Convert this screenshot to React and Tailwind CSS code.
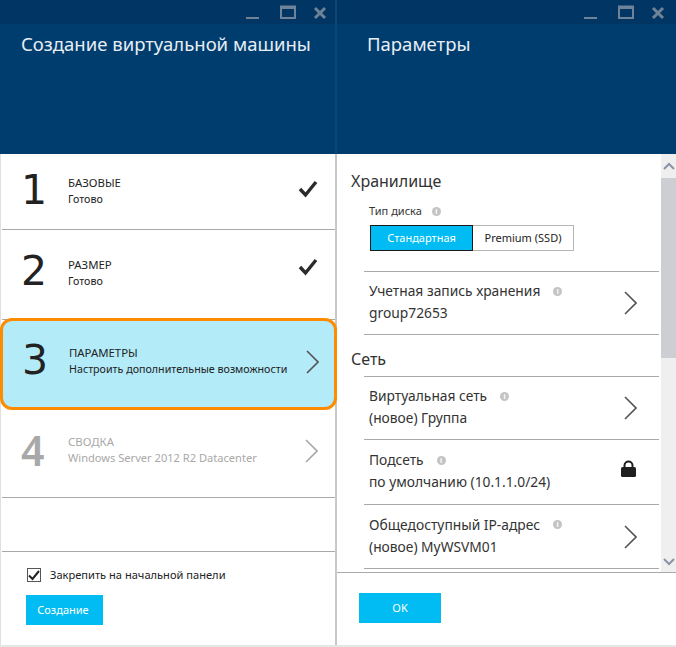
const FONT = "font-['Noto_Sans','Open_Sans',sans-serif]";

function WindowButtons({ pad }) {
  return (
    <div className={`flex h-6 items-center bg-[#003564] ${pad}`}>
      <svg width="82" height="24" viewBox="0 0 82 24" fill="none" stroke="#6f8398">
        <path d="M0 18h13" strokeWidth="2" />
        <rect x="35" y="8" width="14" height="10" strokeWidth="2" />
        <path d="M34 7h16" strokeWidth="3" />
        <path d="M69 8l10 10M79 8L69 18" strokeWidth="3" />
      </svg>
    </div>
  );
}

function Header({ title, pad, btnPad }) {
  return (
    <div className="h-[154px] shrink-0 bg-[#003d6f]">
      <WindowButtons pad={btnPad} />
      <h1 className={`${pad} pt-[6px] text-[18.5px] leading-[28px] text-[#e8eef4]`}>{title}</h1>
    </div>
  );
}

function Chevron({ color = "#555" }) {
  return (
    <svg width="13" height="24" viewBox="0 0 13 24" fill="none" stroke={color} strokeWidth="1.6">
      <path d="M1 1l11 11L1 23" />
    </svg>
  );
}

function Check() {
  return (
    <svg width="20" height="18" viewBox="0 0 20 18" fill="none" stroke="#2b2b2b" strokeWidth="3.4">
      <path d="M2 9l5.5 6L18 2" />
    </svg>
  );
}

function Step({ n, title, sub, subSize = "text-[10.7px]", right, muted, active, height, numTop, textTop, iconTop }) {
  const text = muted ? "text-[#a8a8a8]" : "text-[#222]";
  return (
    <div
      className={
        active
          ? `relative z-10 -mt-[2px] -mr-[2px] -ml-px flex h-[92px] items-start rounded-xl border-[3px] border-[#ff8c00] bg-[#b3ebf9] ${text}`
          : `ml-px flex ${height} items-start border-b border-[#a9a9a9] ${text}`
      }
    >
      <div
        className={`${numTop} ml-[19px] w-[47px] text-[41px] leading-[52px] ${
          muted ? "font-semibold" : "font-['DejaVu_Sans',sans-serif]"
        }`}
      >
        {n}
      </div>
      <div className={`${textTop} flex-1 leading-[16px]`}>
        <div className="text-[11.4px]">{title}</div>
        <div className={subSize}>{sub}</div>
      </div>
      <div className={`${iconTop} ${active ? "mr-[15px]" : "mr-[17px]"}`}>{right}</div>
    </div>
  );
}

function Info({ className = "" }) {
  return (
    <span className={`inline-flex h-[9px] w-[9px] items-center justify-center rounded-full bg-[#c4c4c4] text-[7px] leading-none font-bold text-white ${className}`}>
      i
    </span>
  );
}

function Row({ label, value, right, height }) {
  return (
    <div className={`ml-[27px] mr-[2px] flex ${height} items-center justify-between border-b border-[#a9a9a9] pl-[5px] pr-[22px] text-[13.8px] leading-[22px] text-[#333]`}>
      <div className="-mt-[2px]">
        <div className="flex items-center">
          {label}
          <Info className="ml-[13px]" />
        </div>
        <div>{value}</div>
      </div>
      {right}
    </div>
  );
}

function Lock() {
  return (
    <svg className="-mt-[8px] mr-px" width="15" height="17" viewBox="0 0 15 17">
      <path d="M3.5 8V5.5a4 4 0 018 0V8" fill="none" stroke="#1f1f1f" strokeWidth="2" />
      <rect x="0" y="7" width="15" height="10" rx="1.5" fill="#1f1f1f" />
    </svg>
  );
}

export default function App() {
  return (
    <div className={`${FONT} flex h-[647px] w-[676px] overflow-hidden bg-[#e6e6e6] pb-[2px]`}>
      <section className="flex w-[335px] shrink-0 flex-col bg-white">
        <Header title="Создание виртуальной машины" pad="pl-[21px]" btnPad="pl-[246px]" />
        <div className="flex min-h-0 flex-1 flex-col border-l border-[#e0e0e0]">
          <Step n="1" title="БАЗОВЫЕ" sub="Готово" right={<Check />} height="h-[76px]" numTop="mt-[10px]" textTop="mt-[21px]" iconTop="mt-[26px]" />
          <Step n="2" title="РАЗМЕР" sub="Готово" right={<Check />} height="h-[90px]" numTop="mt-[15px]" textTop="mt-[27px]" iconTop="mt-[28px]" />
          <Step n="3" title="ПАРАМЕТРЫ" sub="Настроить дополнительные возможности" right={<Chevron />} active numTop="mt-[13px]" textTop="mt-[24px]" iconTop="mt-[29px]" />
          <Step n="4" title="СВОДКА" sub="Windows Server 2012 R2 Datacenter" subSize="text-[11.1px]" right={<Chevron color="#a8a8a8" />} muted height="h-[88px]" numTop="mt-[14px]" textTop="mt-[24px]" iconTop="mt-[29px]" />
          <div className="h-[53px]" />
          <div className="ml-px flex-1 border-t border-[#a9a9a9] pl-[25px] pt-[14px]">
            <div className="flex items-center gap-[9px] text-[11.1px] leading-[18px] text-[#222]">
              <span className="flex h-[14px] w-[14px] items-center justify-center border border-[#555]">
                <svg width="12" height="11" viewBox="0 0 12 11" fill="none" stroke="#222" strokeWidth="2">
                  <path d="M1 5.5l3.5 3.5L11 1" />
                </svg>
              </span>
              Закрепить на начальной панели
            </div>
            <div className="-ml-px mt-[11px] flex h-[30px] w-[77px] items-center justify-center bg-[#00bcf2] pr-[3px] text-[11px] text-white">
              Создание
            </div>
          </div>
        </div>
      </section>

      <div className="flex w-[2px] shrink-0 flex-col bg-[#c8c8c8]">
        <div className="h-[154px] bg-[#0a4676]" />
      </div>

      <section className="flex flex-1 flex-col bg-white">
        <Header title="Параметры" pad="pl-[30px]" btnPad="pl-[247px]" />
        <div className="relative flex min-h-0 flex-1">
          <div className="min-w-0 flex-1 overflow-hidden">
            <h2 className="ml-[14px] mt-[15px] text-[16px] leading-[24px] text-[#333]">Хранилище</h2>
            <div className="ml-[32px] mt-[10px] flex items-center text-[11px] leading-[16px] text-[#333]">
              Тип диска
              <Info className="ml-[10px]" />
            </div>
            <div className="ml-[33px] mt-[6px] flex h-[26px] w-[204px] text-[11px]">
              <div className="flex w-[103px] items-center justify-center border border-[#1a1a1a] bg-[#00bcf2] text-white">Стандартная</div>
              <div className="flex flex-1 items-center justify-center border border-l-0 border-[#b5b5b5] text-[#222]">Premium (SSD)</div>
            </div>
            <div className="mt-[20px] ml-[27px] mr-[2px] border-t border-[#a9a9a9]" />
            <Row label="Учетная запись хранения" value="group72653" right={<Chevron />} height="h-[63px]" />
            <h2 className="ml-[14px] mt-[12px] text-[16px] leading-[24px] text-[#333]">Сеть</h2>
            <div className="mt-[5px] ml-[27px] mr-[2px] border-t border-[#a9a9a9]" />
            <Row label="Виртуальная сеть" value="(новое) Группа" right={<Chevron />} height="h-[63px]" />
            <Row label="Подсеть" value="по умолчанию (10.1.1.0/24)" right={<Lock />} height="h-[65px]" />
            <Row label="Общедоступный IP-адрес" value="(новое) MyWSVM01" right={<Chevron />} height="h-[64px]" />
          </div>
          <div className="flex w-[15px] shrink-0 flex-col bg-[#efeff0]">
            <div className="flex h-[24px] items-center justify-center">
              <svg width="12" height="8" viewBox="0 0 12 8" fill="none" stroke="#8c93a8" strokeWidth="2"><path d="M1 7l5-5 5 5" /></svg>
            </div>
            <div className="h-[180px] bg-[#cdced3]" />
            <div className="flex-1" />
            <div className="flex h-[20px] items-center justify-center">
              <svg width="12" height="8" viewBox="0 0 12 8" fill="none" stroke="#8c93a8" strokeWidth="2"><path d="M1 1l5 5 5-5" /></svg>
            </div>
          </div>
        </div>
        <div className="h-[73px] shrink-0 border-t border-[#a9a9a9] pl-[22px] pt-[20px]">
          <div className="flex h-[30px] w-[82px] items-center justify-center bg-[#00bcf2] text-[11px] text-white">OK</div>
        </div>
      </section>
    </div>
  );
}
